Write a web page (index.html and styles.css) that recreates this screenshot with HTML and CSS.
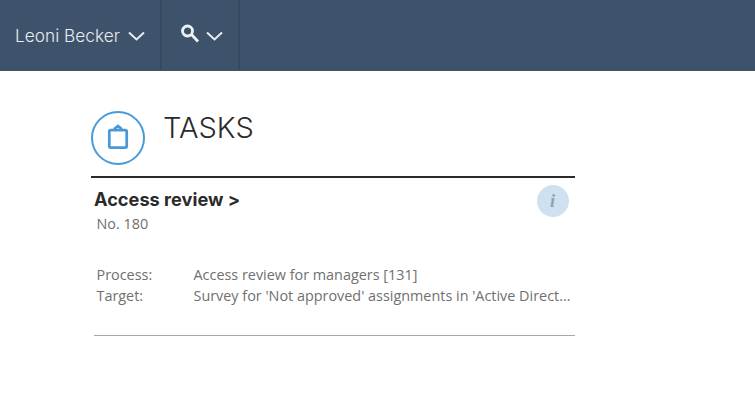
FILE: index.html
```html
<!DOCTYPE html>
<html lang="en">
<head>
    <meta charset="UTF-8">
    <title>Tasks</title>
    <link rel="stylesheet" href="styles.css">
</head>
<body>
    <div class="top-bar">
        <div class="top-item user-menu">
            <span>Leoni Becker</span>
            <svg class="chevron" viewBox="0 0 17 10"><path d="M1 1.5 L8.5 8.5 L16 1.5"/></svg>
        </div>
        <div class="top-item search-menu">
            <svg class="search-icon" viewBox="0 0 20 20"><circle cx="7.5" cy="7" r="5"/><path d="M11.5 10.5 L18 17.5"/></svg>
            <svg class="chevron" viewBox="0 0 17 10"><path d="M1 1.5 L8.5 8.5 L16 1.5"/></svg>
        </div>
    </div>

    <div class="content">
        <div class="page-head">
            <div class="page-icon">
                <svg viewBox="0 0 24 28"><rect x="2.5" y="6.5" width="19" height="19" rx="1.5"/><path d="M8.5 6.5 V5 L12 2 L15.5 5 V6.5"/></svg>
            </div>
            <h1 class="page-title">TASKS</h1>
        </div>

        <!-- Task card -->
        <div class="task">
            <div class="task-head">
                <div>
                    <h2 class="task-title">Access review &gt;</h2>
                    <div class="task-no">No. 180</div>
                </div>
                <span class="info-badge">i</span>
            </div>
            <div class="task-row">
                <span class="task-label">Process:</span>
                <span class="task-value">Access review for managers [131]</span>
            </div>
            <div class="task-row">
                <span class="task-label">Target:</span>
                <span class="task-value">Survey for 'Not approved' assignments in 'Active Direct...</span>
            </div>
        </div>
    </div>
</body>
</html>
```

FILE: styles.css
```css
* {
    margin: 0;
    padding: 0;
    box-sizing: border-box;
}

body {
    background: #ffffff;
    font-family: 'Open Sans', sans-serif;
    overflow: hidden;
}

.top-bar {
    display: flex;
    height: 71px;
    background: #3e536b;
}

.top-item {
    display: flex;
    align-items: center;
    height: 70px;
    border-right: 2px solid #36495d;
    color: #e8ecf0;
}

.user-menu {
    width: 162px;
    padding-left: 15px;
    gap: 8px;
    font-family: 'Inter', sans-serif;
    font-size: 17.3px;
    font-weight: 300;
}

.search-menu {
    width: 78px;
    padding-left: 18px;
    gap: 6px;
}

.chevron {
    width: 17px;
    height: 10px;
    margin-top: 1px;
    fill: none;
    stroke: #e8ecf0;
    stroke-width: 2;
}

.search-icon {
    width: 20px;
    height: 20px;
    margin-top: -3px;
    fill: none;
    stroke: #eef1f4;
    stroke-width: 2.8;
}

.content {
    width: 481px;
    margin-left: 94px;
}

.page-head {
    display: flex;
    height: 107px;
    border-bottom: 2px solid #2b2b2b;
    margin-left: -3px;
    padding-top: 40px;
}

.page-icon {
    display: flex;
    align-items: center;
    justify-content: center;
    width: 54px;
    height: 54px;
    border: 2px solid #4a9ad8;
    border-radius: 50%;
}

.page-icon svg {
    width: 22px;
    height: 26px;
    margin-top: -2px;
    margin-right: 1px;
    fill: none;
    stroke: #4a9ad8;
    stroke-width: 3;
}

.page-title {
    margin-left: 18px;
    font-family: 'Inter', sans-serif;
    font-size: 29px;
    font-weight: 300;
    line-height: 34px;
    color: #2b2b2b;
}

.task {
    height: 158px;
    border-bottom: 1px solid #a8a8a8;
    padding-top: 8px;
}

.task-head {
    display: flex;
    justify-content: space-between;
    height: 78px;
}

.task-title {
    font-family: 'Inter', sans-serif;
    font-size: 18.2px;
    font-weight: 700;
    line-height: 26px;
    color: #2b2b2b;
}

.task-no {
    margin-top: 2px;
    margin-left: 2.5px;
    font-size: 14.4px;
    line-height: 19px;
    color: #707070;
}

.info-badge {
    width: 32px;
    height: 32px;
    margin-top: -1px;
    margin-right: 6.5px;
    border-radius: 50%;
    background: #cfe1f1;
    color: #8ba3b7;
    font-family: 'Liberation Serif', serif;
    font-size: 18px;
    font-weight: 700;
    font-style: italic;
    line-height: 32px;
    text-align: center;
}

.task-row {
    display: flex;
    padding-left: 2.5px;
    font-size: 14.4px;
    line-height: 21px;
    color: #707070;
}

.task-label {
    flex: none;
    width: 97px;
}

.task-value {
    white-space: nowrap;
}
```
